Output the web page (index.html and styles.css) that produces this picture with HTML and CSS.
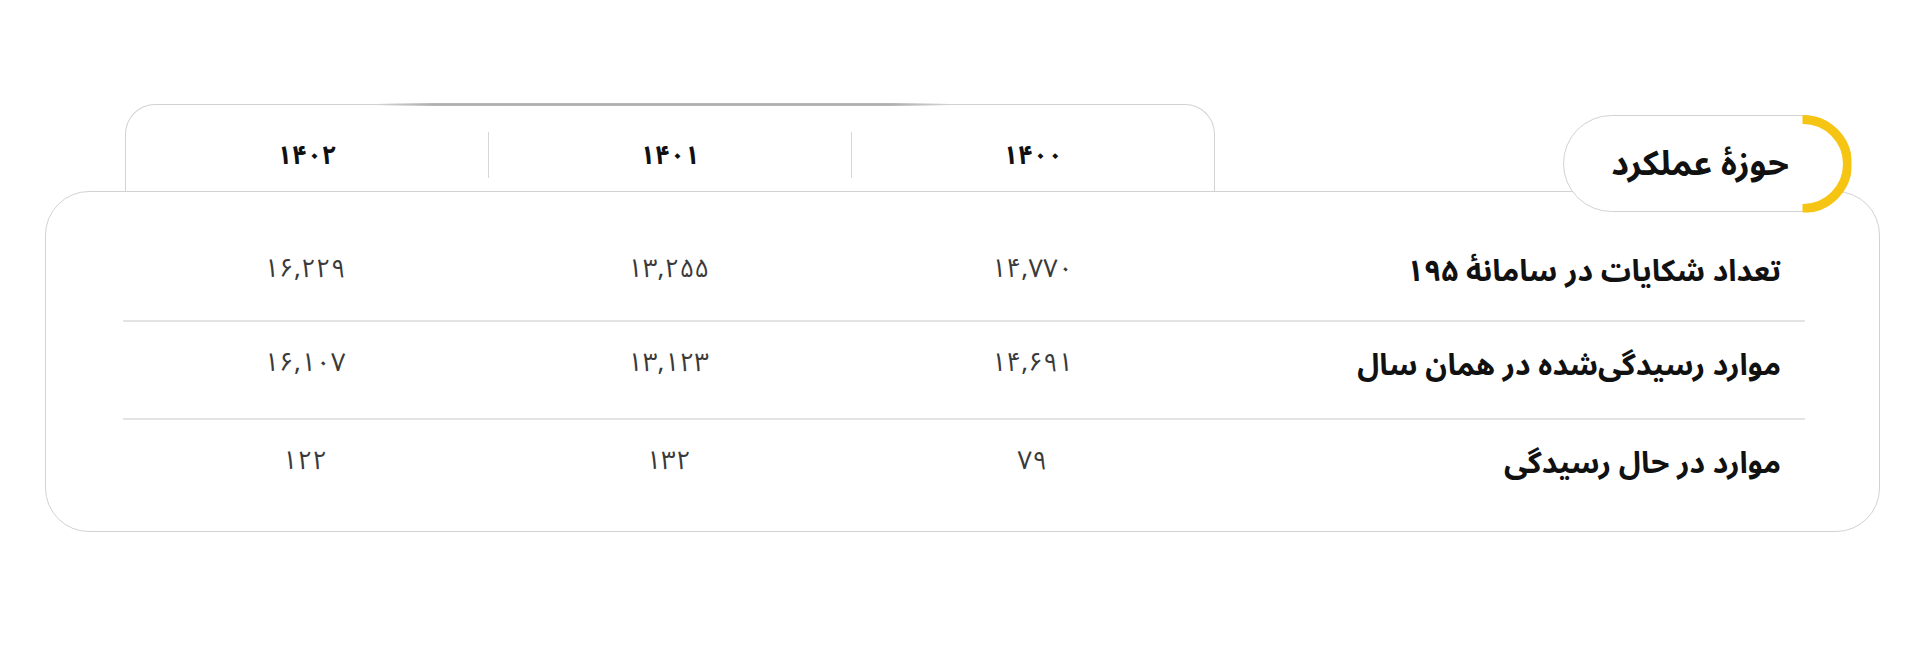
FILE: index.html
```html
<!DOCTYPE html>
<html lang="fa" dir="rtl">
<head>
<meta charset="utf-8">
<title>حوزهٔ عملکرد</title>
<link rel="stylesheet" href="styles.css">
</head>
<body>
<div class="page">
  <div class="header">
    <div class="pill"><span class="pill-text">حوزهٔ عملکرد</span></div>
    <div class="tab">
      <div class="year">۱۴۰۰</div>
      <div class="year">۱۴۰۱</div>
      <div class="year">۱۴۰۲</div>
    </div>
  </div>
  <div class="card">
    <div class="row">
      <div class="label">تعداد شکایات در سامانهٔ ۱۹۵</div>
      <div class="val">۱۴,۷۷۰</div>
      <div class="val">۱۳,۲۵۵</div>
      <div class="val">۱۶,۲۲۹</div>
    </div>
    <div class="row">
      <div class="label">موارد رسیدگی‌شده در همان سال</div>
      <div class="val">۱۴,۶۹۱</div>
      <div class="val">۱۳,۱۲۳</div>
      <div class="val">۱۶,۱۰۷</div>
    </div>
    <div class="row">
      <div class="label">موارد در حال رسیدگی</div>
      <div class="val">۷۹</div>
      <div class="val">۱۳۲</div>
      <div class="val">۱۲۲</div>
    </div>
  </div>
</div>
</body>
</html>
```

FILE: styles.css
```css
html, body {
  margin: 0;
  padding: 0;
  background: #ffffff;
}

body {
  font-family: "Noto Sans Arabic", "Noto Naskh Arabic", "DejaVu Sans", sans-serif;
  color: #1a1a1a;
}

.page {
  padding: 104px 40px 0 45px;
}

.header {
  display: flex;
  align-items: flex-end;
  justify-content: space-between;
  padding: 0 29px 0 80px;
}

.pill {
  position: relative;
  z-index: 2;
  box-sizing: border-box;
  width: 288px;
  height: 97px;
  margin-bottom: -21px;
  border: 1.5px solid #d2d2d2;
  border-radius: 49px;
  background: #ffffff;
  display: flex;
  align-items: center;
  justify-content: center;
  padding-right: 14px;
}

.pill::after {
  content: "";
  position: absolute;
  top: -1.5px;
  right: -1.5px;
  box-sizing: border-box;
  width: 98px;
  height: 98px;
  border: 9px solid #f6c412;
  border-radius: 50%;
  clip-path: inset(0 0 0 50%);
}

.pill-text {
  font-size: 34px;
  font-weight: 700;
  color: #111111;
  line-height: 40px;
}

.tab {
  position: relative;
  box-sizing: border-box;
  width: 1090px;
  height: 87px;
  border: 1.5px solid #d2d2d2;
  border-bottom: none;
  border-radius: 30px 30px 0 0;
  background: #ffffff;
  display: flex;
  padding: 27px 0 13px;
}

.tab::before {
  content: "";
  position: absolute;
  top: -2px;
  left: 250px;
  right: 265px;
  height: 3px;
  background: linear-gradient(to right, rgba(170,170,170,0), rgba(170,170,170,0.85) 10%, rgba(170,170,170,0.85) 90%, rgba(170,170,170,0));
  border-radius: 2px;
}

.year {
  flex: 1;
  display: flex;
  align-items: center;
  justify-content: center;
  font-size: 26px;
  font-weight: 700;
  color: #111111;
}

.year + .year {
  border-right: 1.5px solid #d6d6d6;
}

.card {
  position: relative;
  z-index: 1;
  box-sizing: border-box;
  border: 1.5px solid #d2d2d2;
  border-radius: 44px;
  background: #ffffff;
  padding: 36px 74px 15px 77px;
}

.row {
  display: grid;
  grid-template-columns: 591px repeat(3, 1fr);
  align-items: center;
  padding: 21px 0 35px;
}

.row:first-child {
  padding-bottom: 31px;
}

.row + .row {
  border-top: 2px solid #e3e3e3;
}

.label {
  padding-right: 24px;
  margin-top: 3px;
  margin-bottom: -3px;
  font-size: 30px;
  line-height: 40px;
  font-weight: 700;
  color: #111111;
}

.val {
  text-align: center;
  font-size: 26px;
  line-height: 40px;
  font-weight: 400;
  color: #3a3a3a;
}
```
